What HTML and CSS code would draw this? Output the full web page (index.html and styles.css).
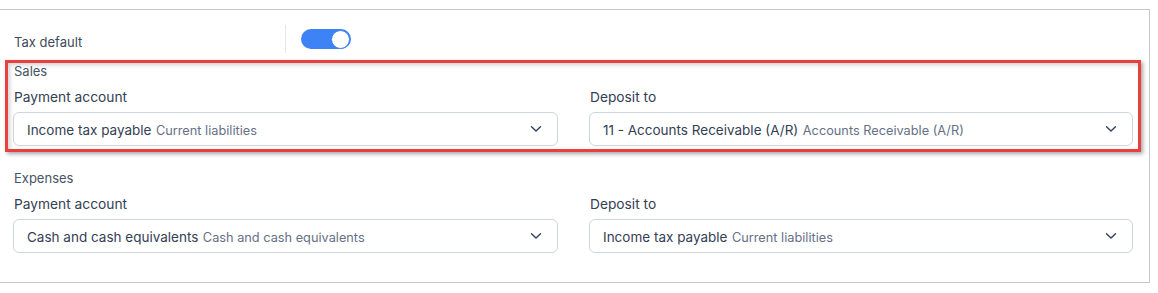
FILE: index.html
```html
<!DOCTYPE html>
<html>
<head>
<meta charset="utf-8">
<link rel="stylesheet" href="styles.css">
</head>
<body>
<div class="panel">
  <div class="tax-row">
    <div class="tax-label">Tax default</div>
    <div class="divider"></div>
    <div class="toggle"><div class="knob"></div></div>
  </div>

  <div class="section section-sales">
    <div class="section-title">Sales</div>
    <div class="fields">
      <div class="field">
        <div class="field-label">Payment account</div>
        <div class="select">
          <span class="value"><span class="main">Income tax payable</span> <span class="sub">Current liabilities</span></span>
          <svg class="chev" width="12" height="8" viewBox="0 0 12 8"><path d="M1.5 1.8 L6 6 L10.5 1.8" fill="none" stroke="#344054" stroke-width="1.4" stroke-linecap="round" stroke-linejoin="round"/></svg>
        </div>
      </div>
      <div class="field">
        <div class="field-label">Deposit to</div>
        <div class="select">
          <span class="value"><span class="main">11 - Accounts Receivable (A/R)</span> <span class="sub">Accounts Receivable (A/R)</span></span>
          <svg class="chev" width="12" height="8" viewBox="0 0 12 8"><path d="M1.5 1.8 L6 6 L10.5 1.8" fill="none" stroke="#344054" stroke-width="1.4" stroke-linecap="round" stroke-linejoin="round"/></svg>
        </div>
      </div>
    </div>
    <div class="highlight"></div>
  </div>

  <div class="section section-exp">
    <div class="section-title">Expenses</div>
    <div class="fields">
      <div class="field">
        <div class="field-label">Payment account</div>
        <div class="select">
          <span class="value"><span class="main">Cash and cash equivalents</span> <span class="sub">Cash and cash equivalents</span></span>
          <svg class="chev" width="12" height="8" viewBox="0 0 12 8"><path d="M1.5 1.8 L6 6 L10.5 1.8" fill="none" stroke="#344054" stroke-width="1.4" stroke-linecap="round" stroke-linejoin="round"/></svg>
        </div>
      </div>
      <div class="field">
        <div class="field-label">Deposit to</div>
        <div class="select">
          <span class="value"><span class="main">Income tax payable</span> <span class="sub">Current liabilities</span></span>
          <svg class="chev" width="12" height="8" viewBox="0 0 12 8"><path d="M1.5 1.8 L6 6 L10.5 1.8" fill="none" stroke="#344054" stroke-width="1.4" stroke-linecap="round" stroke-linejoin="round"/></svg>
        </div>
      </div>
    </div>
  </div>
</div>
</body>
</html>
```

FILE: styles.css
```css
* { box-sizing: border-box; }
html, body { margin: 0; padding: 0; background: #ffffff; }
body {
  font-family: Inter, "Noto Sans", "Liberation Sans", sans-serif;
  color: #344054;
}
.panel {
  margin-top: 9px;
  width: 1150px;
  height: 274px;
  border-top: 1px solid #c8c8c8;
  border-right: 1px solid #c8c8c8;
  border-bottom: 1px solid #c8c8c8;
  padding: 0 15px 0 13px;
}
.tax-row {
  display: flex;
  align-items: center;
  height: 28px;
  margin-top: 15px;
}
.tax-label {
  width: 272px;
  padding-left: 1px;
  padding-top: 6px;
  font-size: 13px;
  line-height: 16px;
  color: #3f4a5a;
}
.divider {
  width: 1px;
  height: 28px;
  background: #e4e7ec;
}
.toggle {
  margin-left: 15px;
  width: 50px;
  height: 20px;
  border-radius: 10px;
  background: #3d83f5;
  display: flex;
  justify-content: flex-end;
  align-items: center;
  padding: 1px;
}
.knob {
  width: 19px;
  height: 19px;
  border-radius: 50%;
  background: #fff;
  border: 1.5px solid #3d83f5;
}
.section { position: relative; }
.section-sales { margin-top: 10px; }
.section-exp { margin-top: 24px; }
.section-title {
  font-size: 13px;
  line-height: 16px;
  padding-left: 1px;
  color: #475467;
}
.fields {
  display: grid;
  grid-template-columns: 545px 544px;
  column-gap: 31px;
  margin-top: 8px;
}
.field-label {
  font-size: 13.75px;
  line-height: 20px;
  padding-left: 1px;
  color: #344054;
  margin-bottom: 5px;
}
.select {
  height: 34px;
  border: 1px solid #d0d5dd;
  border-radius: 6px;
  display: flex;
  align-items: center;
  justify-content: space-between;
  padding: 0 15px 0 13px;
  background: #fff;
}
.value { white-space: nowrap; }
.main { font-size: 13.5px; color: #344054; }
.sub { font-size: 12.75px; color: #667085; }
.chev { display: block; }
.highlight {
  position: absolute;
  left: -8px;
  top: -3px;
  width: 1136px;
  height: 92px;
  border: 3px solid #e8403f;
  box-shadow: 2px 2px 4px rgba(0,0,0,0.35), inset 2px 2px 4px rgba(0,0,0,0.18);
  pointer-events: none;
}
```
